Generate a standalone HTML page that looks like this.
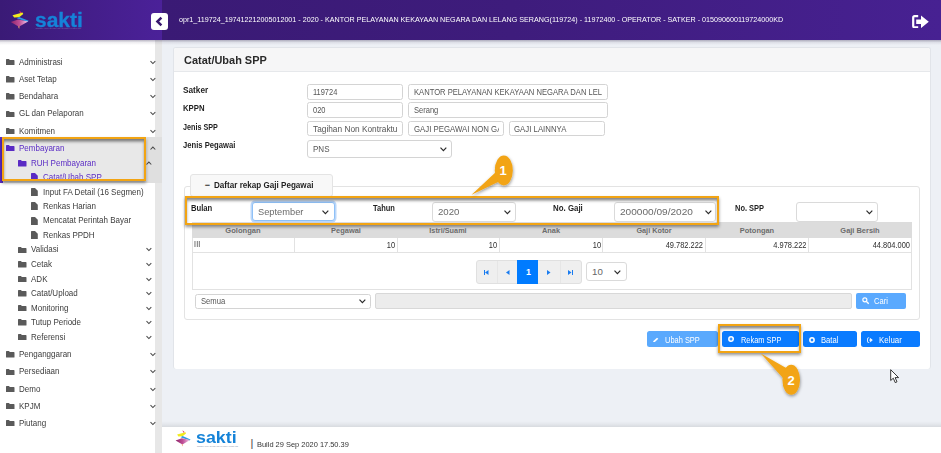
<!DOCTYPE html>
<html lang="id">
<head>
<meta charset="utf-8">
<title>SAKTI - Catat/Ubah SPP</title>
<style>
*{box-sizing:border-box;margin:0;padding:0}
html,body{width:941px;height:453px;overflow:hidden;background:#edf0f5;font-family:"Liberation Sans",sans-serif;font-size:9px;color:#333}
.abs{position:absolute}
.t{position:absolute;white-space:nowrap;line-height:12px;height:12px}
#hdrL{left:0;top:0;width:162px;height:40px;background:linear-gradient(90deg,#3a1a76 0%,#4b2199 100%)}
#hdrR{left:162px;top:0;width:779px;height:40px;background:linear-gradient(90deg,#3a1a75 0%,#3e1c7c 45%,#472192 100%)}
#hdrShadow{left:0;top:40px;width:941px;height:5px;background:linear-gradient(180deg,rgba(40,30,70,.32),rgba(40,30,70,.08) 50%,rgba(40,30,70,0))}
#toggle{left:151px;top:13px;width:17px;height:17px;background:#fff;border-radius:3px}
#side{left:0;top:40px;width:155px;height:413px;background:#fff}
#sbar{left:155.2px;top:40px;width:6.4px;height:413px;background:#e7e7e7}
#card{left:172.6px;top:47.2px;width:758px;height:321.6px;background:#fff;border:1px solid #e1e4e9;border-bottom:none;border-radius:3px}
#cardH{left:173.6px;top:48.2px;width:756px;height:23.6px;background:#f6f6f7;border-bottom:1px solid #e6e8eb;border-radius:2px 2px 0 0}
.box{position:absolute;border:1px solid #d4d4d4;border-radius:2.5px;background:#fff}
.btn{position:absolute;border-radius:2px}
.hl{position:absolute;border:2.3px solid #f2a413;box-shadow:0 2px 3px rgba(0,0,0,.42),inset 0 3px 3px -0.5px rgba(0,0,0,.48)}
</style>
</head>
<body>
<div class="abs" id="side"></div>
<div class="abs" id="sbar"></div>
<div class="abs" id="hdrShadow"></div>
<div class="abs" id="hdrL"></div>
<div class="abs" id="hdrR"></div>
<div class="abs" id="toggle"><svg width="17" height="17" viewBox="0 0 17 17"><path d="M10.4 4.6 L6.4 8.5 L10.4 12.4" fill="none" stroke="#38186f" stroke-width="2.5"/></svg></div>
<div class="t" style="top:14.13px;font-size:8px;color:#fff;left:178.8px;transform-origin:0 50%;transform:scaleX(0.895);">opr1_119724_197412212005012001 - 2020 - KANTOR PELAYANAN KEKAYAAN NEGARA DAN LELANG SERANG(119724) - 11972400 - OPERATOR - SATKER - 015090600119724000KD</div>
<svg class="abs" style="left:10px;top:9.5px" width="19.5" height="19.5" viewBox="0 0 16.2 17" preserveAspectRatio="none">
<defs><linearGradient id="lg1" x1="0" y1="0" x2="1" y2="0"><stop offset="0" stop-color="#8e2468"/><stop offset=".5" stop-color="#bf4f98"/><stop offset=".85" stop-color="#e4a6d2"/><stop offset="1" stop-color="#f6e0f0"/></linearGradient></defs>
<path d="M7.4 0.3L9.9 2.3L8.5 2.8Z" fill="#e2335c"/>
<path d="M2.1 4.6L10.5 2.2L11 3.4L7.6 6.3L3.4 6.5Z" fill="#f1ea1e"/>
<path d="M5.6 7.2L7.6 6.0L15.5 9.4L14.6 10.4Z" fill="#2b98e6"/>
<path d="M0.6 10.5L6.8 8.2L15 10.1L7.4 14.6Z" fill="url(#lg1)"/>
<path d="M6.6 14.4L8 14.2L7.6 16.5Z" fill="#f4a06a"/>
</svg>
<div class="abs" style="left:35.3px;top:7.6px;font-size:19.6px;line-height:24px;font-weight:bold;color:#1583d8;-webkit-text-stroke:0.3px #1583d8;white-space:nowrap;transform-origin:0 50%;transform:scaleX(1.07)">sakti</div>
<div class="abs" style="left:35.5px;top:27.2px;font-size:2.05px;line-height:3px;color:#7a6cae;white-space:nowrap;letter-spacing:-0.07px">SISTEM APLIKASI KEUANGAN TINGKAT INSTANSI</div>
<svg class="abs" style="left:912px;top:14.5px" width="17" height="13.5" viewBox="0 0 17 13.5"><path d="M6.2 1.2H2.6Q1.2 1.2 1.2 2.6V10.9Q1.2 12.3 2.6 12.3H6.2" fill="none" stroke="#fff" stroke-width="2.2"/><path d="M4.2 4.6H9V0.4L16.8 6.75L9 13.1V8.9H4.2Z" fill="#fff"/></svg>
<div class="abs" style="left:0;top:137px;width:162px;height:46px;background:#dfdfdf"></div>
<div class="abs" style="left:0;top:137px;width:2.5px;height:46px;background:#5a2bc4"></div>
<div class="abs" style="left:2.5px;top:137px;width:144px;height:44px;background:#e8e8e8"></div>
<svg class="abs" style="left:6px;top:59px" width="8.5" height="6.4" viewBox="0 0 8.5 6.4"><path d="M0.5 0H3L3.8 0.9H8Q8.5 0.9 8.5 1.4V5.9Q8.5 6.4 8 6.4H0.5Q0 6.4 0 5.9V0.5Q0 0 0.5 0Z" fill="#5a5a5a"/></svg>
<div class="t" style="top:55.88px;font-size:9px;color:#3c3c3c;left:18.5px;transform-origin:0 50%;transform:scaleX(0.890);">Administrasi</div>
<svg class="abs" style="left:149.7px;top:59.8px" width="6" height="5" viewBox="0 0 6 5"><path d="M0.5 1.1L2.9 3.5L5.3 1.1" fill="none" stroke="#4a4a4a" stroke-width="1.05"/></svg>
<svg class="abs" style="left:6px;top:76.2px" width="8.5" height="6.4" viewBox="0 0 8.5 6.4"><path d="M0.5 0H3L3.8 0.9H8Q8.5 0.9 8.5 1.4V5.9Q8.5 6.4 8 6.4H0.5Q0 6.4 0 5.9V0.5Q0 0 0.5 0Z" fill="#5a5a5a"/></svg>
<div class="t" style="top:73.08px;font-size:9px;color:#3c3c3c;left:18.5px;transform-origin:0 50%;transform:scaleX(0.890);">Aset Tetap</div>
<svg class="abs" style="left:149.7px;top:77.0px" width="6" height="5" viewBox="0 0 6 5"><path d="M0.5 1.1L2.9 3.5L5.3 1.1" fill="none" stroke="#4a4a4a" stroke-width="1.05"/></svg>
<svg class="abs" style="left:6px;top:93.4px" width="8.5" height="6.4" viewBox="0 0 8.5 6.4"><path d="M0.5 0H3L3.8 0.9H8Q8.5 0.9 8.5 1.4V5.9Q8.5 6.4 8 6.4H0.5Q0 6.4 0 5.9V0.5Q0 0 0.5 0Z" fill="#5a5a5a"/></svg>
<div class="t" style="top:90.28px;font-size:9px;color:#3c3c3c;left:18.5px;transform-origin:0 50%;transform:scaleX(0.890);">Bendahara</div>
<svg class="abs" style="left:149.7px;top:94.2px" width="6" height="5" viewBox="0 0 6 5"><path d="M0.5 1.1L2.9 3.5L5.3 1.1" fill="none" stroke="#4a4a4a" stroke-width="1.05"/></svg>
<svg class="abs" style="left:6px;top:110.6px" width="8.5" height="6.4" viewBox="0 0 8.5 6.4"><path d="M0.5 0H3L3.8 0.9H8Q8.5 0.9 8.5 1.4V5.9Q8.5 6.4 8 6.4H0.5Q0 6.4 0 5.9V0.5Q0 0 0.5 0Z" fill="#5a5a5a"/></svg>
<div class="t" style="top:107.48px;font-size:9px;color:#3c3c3c;left:18.5px;transform-origin:0 50%;transform:scaleX(0.890);">GL dan Pelaporan</div>
<svg class="abs" style="left:149.7px;top:111.39999999999999px" width="6" height="5" viewBox="0 0 6 5"><path d="M0.5 1.1L2.9 3.5L5.3 1.1" fill="none" stroke="#4a4a4a" stroke-width="1.05"/></svg>
<svg class="abs" style="left:6px;top:127.9px" width="8.5" height="6.4" viewBox="0 0 8.5 6.4"><path d="M0.5 0H3L3.8 0.9H8Q8.5 0.9 8.5 1.4V5.9Q8.5 6.4 8 6.4H0.5Q0 6.4 0 5.9V0.5Q0 0 0.5 0Z" fill="#5a5a5a"/></svg>
<div class="t" style="top:124.78px;font-size:9px;color:#3c3c3c;left:18.5px;transform-origin:0 50%;transform:scaleX(0.890);">Komitmen</div>
<svg class="abs" style="left:149.7px;top:128.70000000000002px" width="6" height="5" viewBox="0 0 6 5"><path d="M0.5 1.1L2.9 3.5L5.3 1.1" fill="none" stroke="#4a4a4a" stroke-width="1.05"/></svg>
<svg class="abs" style="left:6px;top:145.1px" width="8.5" height="6.4" viewBox="0 0 8.5 6.4"><path d="M0.5 0H3L3.8 0.9H8Q8.5 0.9 8.5 1.4V5.9Q8.5 6.4 8 6.4H0.5Q0 6.4 0 5.9V0.5Q0 0 0.5 0Z" fill="#5a2bc4"/></svg>
<div class="t" style="top:141.98px;font-size:9px;color:#5a2bc4;left:18.5px;transform-origin:0 50%;transform:scaleX(0.890);">Pembayaran</div>
<svg class="abs" style="left:149.7px;top:145.9px" width="6" height="5" viewBox="0 0 6 5"><path d="M0.5 3.5L2.9 1.1L5.3 3.5" fill="none" stroke="#4a4a4a" stroke-width="1.05"/></svg>
<svg class="abs" style="left:18.2px;top:160.4px" width="8.5" height="6.4" viewBox="0 0 8.5 6.4"><path d="M0.5 0H3L3.8 0.9H8Q8.5 0.9 8.5 1.4V5.9Q8.5 6.4 8 6.4H0.5Q0 6.4 0 5.9V0.5Q0 0 0.5 0Z" fill="#5a2bc4"/></svg>
<div class="t" style="top:157.28px;font-size:9px;color:#5a2bc4;left:30.8px;transform-origin:0 50%;transform:scaleX(0.890);">RUH Pembayaran</div>
<svg class="abs" style="left:146.4px;top:161.20000000000002px" width="6" height="5" viewBox="0 0 6 5"><path d="M0.5 3.5L2.9 1.1L5.3 3.5" fill="none" stroke="#4a4a4a" stroke-width="1.05"/></svg>
<div class="abs" style="left:0;top:170px;width:146px;height:9.6px;overflow:hidden"><div class="abs" style="left:0;top:-170px;width:146px;height:300px">
<svg class="abs" style="left:30.9px;top:172.9px" width="6.8" height="8.4" viewBox="0 0 6.8 8.4"><path d="M0.6 0H4L6.8 2.8V7.8Q6.8 8.4 6.2 8.4H0.6Q0 8.4 0 7.8V0.6Q0 0 0.6 0Z" fill="#5a2bc4"/></svg>
<div class="t" style="top:170.78px;font-size:9px;color:#5a2bc4;left:43px;transform-origin:0 50%;transform:scaleX(0.890);">Catat/Ubah SPP</div>
</div></div>
<svg class="abs" style="left:30.9px;top:187.7px" width="6.8" height="8.4" viewBox="0 0 6.8 8.4"><path d="M0.6 0H4L6.8 2.8V7.8Q6.8 8.4 6.2 8.4H0.6Q0 8.4 0 7.8V0.6Q0 0 0.6 0Z" fill="#5a5a5a"/></svg>
<div class="t" style="top:185.58px;font-size:9px;color:#3c3c3c;left:43px;transform-origin:0 50%;transform:scaleX(0.890);">Input FA Detail (16 Segmen)</div>
<svg class="abs" style="left:30.9px;top:202px" width="6.8" height="8.4" viewBox="0 0 6.8 8.4"><path d="M0.6 0H4L6.8 2.8V7.8Q6.8 8.4 6.2 8.4H0.6Q0 8.4 0 7.8V0.6Q0 0 0.6 0Z" fill="#5a5a5a"/></svg>
<div class="t" style="top:199.88px;font-size:9px;color:#3c3c3c;left:43px;transform-origin:0 50%;transform:scaleX(0.890);">Renkas Harian</div>
<svg class="abs" style="left:30.9px;top:216.5px" width="6.8" height="8.4" viewBox="0 0 6.8 8.4"><path d="M0.6 0H4L6.8 2.8V7.8Q6.8 8.4 6.2 8.4H0.6Q0 8.4 0 7.8V0.6Q0 0 0.6 0Z" fill="#5a5a5a"/></svg>
<div class="t" style="top:214.38px;font-size:9px;color:#3c3c3c;left:43px;transform-origin:0 50%;transform:scaleX(0.890);">Mencatat Perintah Bayar</div>
<svg class="abs" style="left:30.9px;top:230.9px" width="6.8" height="8.4" viewBox="0 0 6.8 8.4"><path d="M0.6 0H4L6.8 2.8V7.8Q6.8 8.4 6.2 8.4H0.6Q0 8.4 0 7.8V0.6Q0 0 0.6 0Z" fill="#5a5a5a"/></svg>
<div class="t" style="top:228.78px;font-size:9px;color:#3c3c3c;left:43px;transform-origin:0 50%;transform:scaleX(0.890);">Renkas PPDH</div>
<svg class="abs" style="left:18.2px;top:246.6px" width="8.5" height="6.4" viewBox="0 0 8.5 6.4"><path d="M0.5 0H3L3.8 0.9H8Q8.5 0.9 8.5 1.4V5.9Q8.5 6.4 8 6.4H0.5Q0 6.4 0 5.9V0.5Q0 0 0.5 0Z" fill="#5a5a5a"/></svg>
<div class="t" style="top:243.48px;font-size:9px;color:#3c3c3c;left:30.8px;transform-origin:0 50%;transform:scaleX(0.890);">Validasi</div>
<svg class="abs" style="left:146.4px;top:247.4px" width="6" height="5" viewBox="0 0 6 5"><path d="M0.5 1.1L2.9 3.5L5.3 1.1" fill="none" stroke="#4a4a4a" stroke-width="1.05"/></svg>
<svg class="abs" style="left:18.2px;top:261.2px" width="8.5" height="6.4" viewBox="0 0 8.5 6.4"><path d="M0.5 0H3L3.8 0.9H8Q8.5 0.9 8.5 1.4V5.9Q8.5 6.4 8 6.4H0.5Q0 6.4 0 5.9V0.5Q0 0 0.5 0Z" fill="#5a5a5a"/></svg>
<div class="t" style="top:258.08px;font-size:9px;color:#3c3c3c;left:30.8px;transform-origin:0 50%;transform:scaleX(0.890);">Cetak</div>
<svg class="abs" style="left:146.4px;top:262.0px" width="6" height="5" viewBox="0 0 6 5"><path d="M0.5 1.1L2.9 3.5L5.3 1.1" fill="none" stroke="#4a4a4a" stroke-width="1.05"/></svg>
<svg class="abs" style="left:18.2px;top:275.7px" width="8.5" height="6.4" viewBox="0 0 8.5 6.4"><path d="M0.5 0H3L3.8 0.9H8Q8.5 0.9 8.5 1.4V5.9Q8.5 6.4 8 6.4H0.5Q0 6.4 0 5.9V0.5Q0 0 0.5 0Z" fill="#5a5a5a"/></svg>
<div class="t" style="top:272.58px;font-size:9px;color:#3c3c3c;left:30.8px;transform-origin:0 50%;transform:scaleX(0.890);">ADK</div>
<svg class="abs" style="left:146.4px;top:276.5px" width="6" height="5" viewBox="0 0 6 5"><path d="M0.5 1.1L2.9 3.5L5.3 1.1" fill="none" stroke="#4a4a4a" stroke-width="1.05"/></svg>
<svg class="abs" style="left:18.2px;top:290.3px" width="8.5" height="6.4" viewBox="0 0 8.5 6.4"><path d="M0.5 0H3L3.8 0.9H8Q8.5 0.9 8.5 1.4V5.9Q8.5 6.4 8 6.4H0.5Q0 6.4 0 5.9V0.5Q0 0 0.5 0Z" fill="#5a5a5a"/></svg>
<div class="t" style="top:287.18px;font-size:9px;color:#3c3c3c;left:30.8px;transform-origin:0 50%;transform:scaleX(0.890);">Catat/Upload</div>
<svg class="abs" style="left:146.4px;top:291.1px" width="6" height="5" viewBox="0 0 6 5"><path d="M0.5 1.1L2.9 3.5L5.3 1.1" fill="none" stroke="#4a4a4a" stroke-width="1.05"/></svg>
<svg class="abs" style="left:18.2px;top:304.7px" width="8.5" height="6.4" viewBox="0 0 8.5 6.4"><path d="M0.5 0H3L3.8 0.9H8Q8.5 0.9 8.5 1.4V5.9Q8.5 6.4 8 6.4H0.5Q0 6.4 0 5.9V0.5Q0 0 0.5 0Z" fill="#5a5a5a"/></svg>
<div class="t" style="top:301.58px;font-size:9px;color:#3c3c3c;left:30.8px;transform-origin:0 50%;transform:scaleX(0.890);">Monitoring</div>
<svg class="abs" style="left:146.4px;top:305.5px" width="6" height="5" viewBox="0 0 6 5"><path d="M0.5 1.1L2.9 3.5L5.3 1.1" fill="none" stroke="#4a4a4a" stroke-width="1.05"/></svg>
<svg class="abs" style="left:18.2px;top:319.2px" width="8.5" height="6.4" viewBox="0 0 8.5 6.4"><path d="M0.5 0H3L3.8 0.9H8Q8.5 0.9 8.5 1.4V5.9Q8.5 6.4 8 6.4H0.5Q0 6.4 0 5.9V0.5Q0 0 0.5 0Z" fill="#5a5a5a"/></svg>
<div class="t" style="top:316.08px;font-size:9px;color:#3c3c3c;left:30.8px;transform-origin:0 50%;transform:scaleX(0.890);">Tutup Periode</div>
<svg class="abs" style="left:146.4px;top:320.0px" width="6" height="5" viewBox="0 0 6 5"><path d="M0.5 1.1L2.9 3.5L5.3 1.1" fill="none" stroke="#4a4a4a" stroke-width="1.05"/></svg>
<svg class="abs" style="left:18.2px;top:333.8px" width="8.5" height="6.4" viewBox="0 0 8.5 6.4"><path d="M0.5 0H3L3.8 0.9H8Q8.5 0.9 8.5 1.4V5.9Q8.5 6.4 8 6.4H0.5Q0 6.4 0 5.9V0.5Q0 0 0.5 0Z" fill="#5a5a5a"/></svg>
<div class="t" style="top:330.68px;font-size:9px;color:#3c3c3c;left:30.8px;transform-origin:0 50%;transform:scaleX(0.890);">Referensi</div>
<svg class="abs" style="left:146.4px;top:334.6px" width="6" height="5" viewBox="0 0 6 5"><path d="M0.5 1.1L2.9 3.5L5.3 1.1" fill="none" stroke="#4a4a4a" stroke-width="1.05"/></svg>
<svg class="abs" style="left:6px;top:351.3px" width="8.5" height="6.4" viewBox="0 0 8.5 6.4"><path d="M0.5 0H3L3.8 0.9H8Q8.5 0.9 8.5 1.4V5.9Q8.5 6.4 8 6.4H0.5Q0 6.4 0 5.9V0.5Q0 0 0.5 0Z" fill="#5a5a5a"/></svg>
<div class="t" style="top:348.18px;font-size:9px;color:#3c3c3c;left:18.5px;transform-origin:0 50%;transform:scaleX(0.890);">Penganggaran</div>
<svg class="abs" style="left:149.7px;top:352.1px" width="6" height="5" viewBox="0 0 6 5"><path d="M0.5 1.1L2.9 3.5L5.3 1.1" fill="none" stroke="#4a4a4a" stroke-width="1.05"/></svg>
<svg class="abs" style="left:6px;top:368.5px" width="8.5" height="6.4" viewBox="0 0 8.5 6.4"><path d="M0.5 0H3L3.8 0.9H8Q8.5 0.9 8.5 1.4V5.9Q8.5 6.4 8 6.4H0.5Q0 6.4 0 5.9V0.5Q0 0 0.5 0Z" fill="#5a5a5a"/></svg>
<div class="t" style="top:365.38px;font-size:9px;color:#3c3c3c;left:18.5px;transform-origin:0 50%;transform:scaleX(0.890);">Persediaan</div>
<svg class="abs" style="left:149.7px;top:369.3px" width="6" height="5" viewBox="0 0 6 5"><path d="M0.5 1.1L2.9 3.5L5.3 1.1" fill="none" stroke="#4a4a4a" stroke-width="1.05"/></svg>
<svg class="abs" style="left:6px;top:385.7px" width="8.5" height="6.4" viewBox="0 0 8.5 6.4"><path d="M0.5 0H3L3.8 0.9H8Q8.5 0.9 8.5 1.4V5.9Q8.5 6.4 8 6.4H0.5Q0 6.4 0 5.9V0.5Q0 0 0.5 0Z" fill="#5a5a5a"/></svg>
<div class="t" style="top:382.58px;font-size:9px;color:#3c3c3c;left:18.5px;transform-origin:0 50%;transform:scaleX(0.890);">Demo</div>
<svg class="abs" style="left:149.7px;top:386.5px" width="6" height="5" viewBox="0 0 6 5"><path d="M0.5 1.1L2.9 3.5L5.3 1.1" fill="none" stroke="#4a4a4a" stroke-width="1.05"/></svg>
<svg class="abs" style="left:6px;top:402.9px" width="8.5" height="6.4" viewBox="0 0 8.5 6.4"><path d="M0.5 0H3L3.8 0.9H8Q8.5 0.9 8.5 1.4V5.9Q8.5 6.4 8 6.4H0.5Q0 6.4 0 5.9V0.5Q0 0 0.5 0Z" fill="#5a5a5a"/></svg>
<div class="t" style="top:399.78px;font-size:9px;color:#3c3c3c;left:18.5px;transform-origin:0 50%;transform:scaleX(0.890);">KPJM</div>
<svg class="abs" style="left:149.7px;top:403.7px" width="6" height="5" viewBox="0 0 6 5"><path d="M0.5 1.1L2.9 3.5L5.3 1.1" fill="none" stroke="#4a4a4a" stroke-width="1.05"/></svg>
<svg class="abs" style="left:6px;top:420.1px" width="8.5" height="6.4" viewBox="0 0 8.5 6.4"><path d="M0.5 0H3L3.8 0.9H8Q8.5 0.9 8.5 1.4V5.9Q8.5 6.4 8 6.4H0.5Q0 6.4 0 5.9V0.5Q0 0 0.5 0Z" fill="#5a5a5a"/></svg>
<div class="t" style="top:416.98px;font-size:9px;color:#3c3c3c;left:18.5px;transform-origin:0 50%;transform:scaleX(0.890);">Piutang</div>
<svg class="abs" style="left:149.7px;top:420.90000000000003px" width="6" height="5" viewBox="0 0 6 5"><path d="M0.5 1.1L2.9 3.5L5.3 1.1" fill="none" stroke="#4a4a4a" stroke-width="1.05"/></svg>
<div class="hl" style="left:2.4px;top:137px;width:143.8px;height:44.2px"></div>
<div class="abs" id="card"></div>
<div class="abs" id="cardH"></div>
<div class="t" style="top:54.23px;font-size:10.6px;color:#2a2a2a;font-weight:bold;left:183.7px;transform-origin:0 50%;transform:scaleX(1.034);">Catat/Ubah SPP</div>
<div class="t" style="top:84.18px;font-size:9px;color:#1f1f1f;font-weight:bold;left:183px;transform-origin:0 50%;transform:scaleX(0.916);">Satker</div>
<div class="t" style="top:102.28px;font-size:9px;color:#1f1f1f;font-weight:bold;left:183px;transform-origin:0 50%;transform:scaleX(0.860);">KPPN</div>
<div class="t" style="top:120.58px;font-size:9px;color:#1f1f1f;font-weight:bold;left:183px;transform-origin:0 50%;transform:scaleX(0.800);">Jenis SPP</div>
<div class="t" style="top:139.08px;font-size:9px;color:#1f1f1f;font-weight:bold;left:183px;transform-origin:0 50%;transform:scaleX(0.850);">Jenis Pegawai</div>
<div class="box" style="left:307.4px;top:84.4px;width:96px;height:15.4px;"></div>
<div class="abs" style="left:308.4px;top:84.4px;width:90.4px;height:15.4px;overflow:hidden">
<div class="t" style="left:4.6px;top:1.95px;font-size:8.5px;color:#555;transform-origin:0 50%;transform:scaleX(0.876)">119724</div></div>
<div class="box" style="left:408.2px;top:84.4px;width:199.6px;height:15.4px;"></div>
<div class="abs" style="left:409.2px;top:84.4px;width:194.0px;height:15.4px;overflow:hidden">
<div class="t" style="left:4.6px;top:1.95px;font-size:8.5px;color:#555;transform-origin:0 50%;transform:scaleX(0.896)">KANTOR PELAYANAN KEKAYAAN NEGARA DAN LEL</div></div>
<div class="box" style="left:307.4px;top:102.4px;width:96px;height:15.4px;"></div>
<div class="abs" style="left:308.4px;top:102.4px;width:90.4px;height:15.4px;overflow:hidden">
<div class="t" style="left:4.6px;top:1.95px;font-size:8.5px;color:#555;transform-origin:0 50%;transform:scaleX(0.876)">020</div></div>
<div class="box" style="left:408.2px;top:102.4px;width:199.6px;height:15.4px;"></div>
<div class="abs" style="left:409.2px;top:102.4px;width:194.0px;height:15.4px;overflow:hidden">
<div class="t" style="left:4.6px;top:1.95px;font-size:8.5px;color:#555;transform-origin:0 50%;transform:scaleX(0.887)">Serang</div></div>
<div class="box" style="left:307.4px;top:120.8px;width:96px;height:15.4px;"></div>
<div class="abs" style="left:308.4px;top:120.8px;width:90.4px;height:15.4px;overflow:hidden">
<div class="t" style="left:4.6px;top:2.25px;font-size:8.5px;color:#555;transform-origin:0 50%;transform:scaleX(0.977)">Tagihan Non Kontraktu</div></div>
<div class="box" style="left:408.2px;top:120.8px;width:95.8px;height:15.4px;"></div>
<div class="abs" style="left:409.2px;top:120.8px;width:90.2px;height:15.4px;overflow:hidden">
<div class="t" style="left:4.6px;top:2.25px;font-size:8.5px;color:#555;transform-origin:0 50%;transform:scaleX(0.919)">GAJI PEGAWAI NON GA</div></div>
<div class="box" style="left:508.7px;top:120.8px;width:96px;height:15.4px;"></div>
<div class="abs" style="left:509.7px;top:120.8px;width:90.4px;height:15.4px;overflow:hidden">
<div class="t" style="left:4.6px;top:2.25px;font-size:8.5px;color:#555;transform-origin:0 50%;transform:scaleX(0.919)">GAJI LAINNYA</div></div>
<div class="box" style="left:307.4px;top:140px;width:144.2px;height:18.4px;border-radius:3px;"></div>
<div class="t" style="top:143.08px;font-size:9px;color:#555;left:312.9px;transform-origin:0 50%;transform:scaleX(0.892);">PNS</div>
<svg class="abs" style="left:439.8px;top:146.8px" width="7" height="5" viewBox="0 0 7 5"><path d="M0.5 0.6L3.4 3.7L6.3 0.6" fill="none" stroke="#2b2b2b" stroke-width="1.15"/></svg>
<div class="abs" style="left:183.5px;top:185.5px;width:736px;height:134px;border:1px solid #e3e3e3;border-radius:3px;background:#fff"></div>
<div class="abs" style="left:190.3px;top:174px;width:142.5px;height:23px;border:1px solid #e4e4e4;border-radius:3px;background:#f8f8f8"></div>
<div class="t" style="top:178.88px;font-size:9px;color:#1f1f1f;font-weight:bold;left:204.8px;transform-origin:0 50%;transform:scaleX(1.000);">−</div>
<div class="t" style="top:178.98px;font-size:9px;color:#1f1f1f;font-weight:bold;left:214.2px;transform-origin:0 50%;transform:scaleX(0.899);">Daftar rekap Gaji Pegawai</div>
<div class="abs" style="left:191.5px;top:222px;width:720.5px;height:15.6px;background:#dcdcdc"></div>
<div class="abs" style="left:191.5px;top:237.6px;width:720.5px;height:52.6px;border:1px solid #e2e2e2;border-top:none;background:#fff"></div>
<div class="t" style="top:225.03px;font-size:8px;color:#6c6c6c;font-weight:bold;left:242.95px;transform:translateX(-50%) scaleX(0.946);">Golongan</div>
<div class="t" style="top:239.46px;font-size:8.2px;color:#333;left:193.6px;transform-origin:0 50%;transform:scaleX(0.860);letter-spacing:0.25px;">III</div>
<div class="abs" style="left:293.9px;top:237.6px;width:1px;height:15px;background:#e2e2e2"></div>
<div class="t" style="top:225.03px;font-size:8px;color:#6c6c6c;font-weight:bold;left:345.9px;transform:translateX(-50%) scaleX(0.930);">Pegawai</div>
<div class="t" style="top:239.56px;font-size:8.2px;color:#2e2e2e;right:545.7px;transform-origin:100% 50%;transform:scaleX(0.910);">10</div>
<div class="abs" style="left:396.9px;top:237.6px;width:1px;height:15px;background:#e2e2e2"></div>
<div class="t" style="top:225.03px;font-size:8px;color:#6c6c6c;font-weight:bold;left:448.4px;transform:translateX(-50%) scaleX(0.912);">Istri/Suami</div>
<div class="t" style="top:239.56px;font-size:8.2px;color:#2e2e2e;right:443.70000000000005px;transform-origin:100% 50%;transform:scaleX(0.910);">10</div>
<div class="abs" style="left:498.9px;top:237.6px;width:1px;height:15px;background:#e2e2e2"></div>
<div class="t" style="top:225.03px;font-size:8px;color:#6c6c6c;font-weight:bold;left:551.0999999999999px;transform:translateX(-50%) scaleX(0.930);">Anak</div>
<div class="t" style="top:239.56px;font-size:8.2px;color:#2e2e2e;right:340.30000000000007px;transform-origin:100% 50%;transform:scaleX(0.910);">10</div>
<div class="abs" style="left:602.3px;top:237.6px;width:1px;height:15px;background:#e2e2e2"></div>
<div class="t" style="top:225.03px;font-size:8px;color:#6c6c6c;font-weight:bold;left:654.0999999999999px;transform:translateX(-50%) scaleX(0.910);">Gaji Kotor</div>
<div class="t" style="top:239.56px;font-size:8.2px;color:#2e2e2e;right:237.70000000000005px;transform-origin:100% 50%;transform:scaleX(0.910);">49.782.222</div>
<div class="abs" style="left:704.9px;top:237.6px;width:1px;height:15px;background:#e2e2e2"></div>
<div class="t" style="top:225.03px;font-size:8px;color:#6c6c6c;font-weight:bold;left:756.8499999999999px;transform:translateX(-50%) scaleX(0.930);">Potongan</div>
<div class="t" style="top:239.56px;font-size:8.2px;color:#2e2e2e;right:134.80000000000007px;transform-origin:100% 50%;transform:scaleX(0.910);">4.978.222</div>
<div class="abs" style="left:807.8px;top:237.6px;width:1px;height:15px;background:#e2e2e2"></div>
<div class="t" style="top:225.03px;font-size:8px;color:#6c6c6c;font-weight:bold;left:860.15px;transform:translateX(-50%) scaleX(0.930);">Gaji Bersih</div>
<div class="t" style="top:239.56px;font-size:8.2px;color:#2e2e2e;right:31.100000000000023px;transform-origin:100% 50%;transform:scaleX(0.910);">44.804.000</div>
<div class="abs" style="left:191.5px;top:252.2px;width:720.5px;height:1px;background:#e2e2e2"></div>
<div class="abs" style="left:476.2px;top:260px;width:106px;height:23.6px;background:#efefef;border:1px solid #e0e0e0;border-radius:3px"></div>
<div class="abs" style="left:497px;top:261px;width:1px;height:21.6px;background:#e6e6e6"></div>
<div class="abs" style="left:559.5px;top:261px;width:1px;height:21.6px;background:#e6e6e6"></div>
<div class="abs" style="left:517px;top:260px;width:21px;height:23.6px;background:#007bff"></div>
<div class="t" style="top:266.08px;font-size:9px;color:#fff;font-weight:bold;left:528.6px;transform:translateX(-50%) scaleX(1.000);">1</div>
<div class="abs" style="left:484px;top:269.5px;width:1px;height:5px;background:#1a7cf0"></div>
<svg class="abs" style="left:485px;top:269.5px" width="4" height="5" viewBox="0 0 4 5"><path d="M3.5 0L0 2.5L3.5 5Z" fill="#1a7cf0"/></svg>
<svg class="abs" style="left:506px;top:269.5px" width="4" height="5" viewBox="0 0 4 5"><path d="M3.5 0L0 2.5L3.5 5Z" fill="#1a7cf0"/></svg>
<svg class="abs" style="left:547px;top:269.5px" width="4" height="5" viewBox="0 0 4 5"><path d="M0 0L3.5 2.5L0 5Z" fill="#1a7cf0"/></svg>
<svg class="abs" style="left:568px;top:269.5px" width="4" height="5" viewBox="0 0 4 5"><path d="M0 0L3.5 2.5L0 5Z" fill="#1a7cf0"/></svg>
<div class="abs" style="left:572px;top:269.5px;width:1px;height:5px;background:#1a7cf0"></div>
<div class="box" style="left:586px;top:262px;width:41px;height:19.3px;border-radius:3px;border-color:#dadada;"></div>
<div class="t" style="top:265.94px;font-size:9.7px;color:#666;left:592px;transform-origin:0 50%;transform:scaleX(1.000);">10</div>
<svg class="abs" style="left:614px;top:269.5px" width="7" height="5" viewBox="0 0 7 5"><path d="M0.5 0.6L3.4 3.7L6.3 0.6" fill="none" stroke="#2b2b2b" stroke-width="1.15"/></svg>
<div class="box" style="left:195.4px;top:293.6px;width:175.4px;height:15.6px;"></div>
<div class="t" style="top:294.75px;font-size:8.5px;color:#555;left:200.5px;transform-origin:0 50%;transform:scaleX(0.900);">Semua</div>
<svg class="abs" style="left:358.5px;top:298.7px" width="7" height="5" viewBox="0 0 7 5"><path d="M0.5 0.6L3.4 3.7L6.3 0.6" fill="none" stroke="#2b2b2b" stroke-width="1.15"/></svg>
<div class="abs" style="left:374.6px;top:293.4px;width:477px;height:15.2px;background:#ececec;border:1px solid #d8d8d8;border-radius:2px"></div>
<div class="btn" style="left:856.4px;top:293.2px;width:50px;height:15.4px;background:#5aa9fe"></div>
<svg class="abs" style="left:862px;top:297.3px" width="7.4" height="7.4" viewBox="0 0 7 7"><circle cx="2.7" cy="2.7" r="1.9" fill="none" stroke="#fff" stroke-width="1.1"/><path d="M4.2 4.2L6.4 6.4" stroke="#fff" stroke-width="1.2"/></svg>
<div class="t" style="top:294.75px;font-size:8.5px;color:#fff;left:874.4px;transform-origin:0 50%;transform:scaleX(0.892);">Cari</div>
<div class="abs" style="left:185px;top:196.4px;width:734px;height:26px;background:#fff"></div>
<div class="t" style="top:201.98px;font-size:9px;color:#1f1f1f;font-weight:bold;left:190.9px;transform-origin:0 50%;transform:scaleX(0.852);">Bulan</div>
<div class="box" style="left:252px;top:202px;width:82.5px;height:19.3px;border-color:#8fc1f7;box-shadow:0 0 0 1.5px rgba(120,175,245,.5);border-radius:3px;"></div>
<div class="t" style="top:205.90px;font-size:9.8px;color:#6a6a6a;left:257.5px;transform-origin:0 50%;transform:scaleX(0.947);">September</div>
<svg class="abs" style="left:322px;top:209.6px" width="7" height="5" viewBox="0 0 7 5"><path d="M0.5 0.6L3.4 3.7L6.3 0.6" fill="none" stroke="#2b2b2b" stroke-width="1.15"/></svg>
<div class="t" style="top:201.98px;font-size:9px;color:#1f1f1f;font-weight:bold;left:372.8px;transform-origin:0 50%;transform:scaleX(0.832);">Tahun</div>
<div class="box" style="left:432.4px;top:202.2px;width:83.2px;height:19.4px;border-radius:3px;border-color:#dadada;"></div>
<div class="t" style="top:205.90px;font-size:9.8px;color:#6a6a6a;left:438.4px;transform-origin:0 50%;transform:scaleX(0.986);">2020</div>
<svg class="abs" style="left:503.5px;top:209.6px" width="7" height="5" viewBox="0 0 7 5"><path d="M0.5 0.6L3.4 3.7L6.3 0.6" fill="none" stroke="#2b2b2b" stroke-width="1.15"/></svg>
<div class="t" style="top:201.98px;font-size:9px;color:#1f1f1f;font-weight:bold;left:552.8px;transform-origin:0 50%;transform:scaleX(0.876);">No. Gaji</div>
<div class="box" style="left:614.3px;top:202.2px;width:102px;height:19.4px;border-radius:3px;border-color:#dadada;"></div>
<div class="t" style="top:205.90px;font-size:9.8px;color:#6a6a6a;left:619.5px;transform-origin:0 50%;transform:scaleX(1.030);">200000/09/2020</div>
<svg class="abs" style="left:705.2px;top:209.6px" width="7" height="5" viewBox="0 0 7 5"><path d="M0.5 0.6L3.4 3.7L6.3 0.6" fill="none" stroke="#2b2b2b" stroke-width="1.15"/></svg>
<div class="t" style="top:201.98px;font-size:9px;color:#1f1f1f;font-weight:bold;left:734.8px;transform-origin:0 50%;transform:scaleX(0.828);">No. SPP</div>
<div class="box" style="left:795.5px;top:202.2px;width:82.6px;height:19.4px;border-radius:3px;border-color:#dadada;"></div>
<svg class="abs" style="left:865.5px;top:209.6px" width="7" height="5" viewBox="0 0 7 5"><path d="M0.5 0.6L3.4 3.7L6.3 0.6" fill="none" stroke="#2b2b2b" stroke-width="1.15"/></svg>
<div class="hl" style="left:185px;top:196.4px;width:534px;height:28.6px"></div>
<div class="btn" style="left:647px;top:331.4px;width:71px;height:15.5px;background:#5aa9fd;border-radius:2.5px"></div>
<svg class="abs" style="left:653px;top:336.6px" width="6" height="5.6" viewBox="0 0 6 6" preserveAspectRatio="none"><path d="M0 6L0.4 4.3L4 0.7L5.3 2L1.7 5.6Z" fill="#fff"/></svg>
<div class="t" style="top:333.52px;font-size:8.3px;color:#fff;left:665.2px;transform-origin:0 50%;transform:scaleX(0.898);">Ubah SPP</div>
<div class="btn" style="left:803px;top:331.4px;width:53.6px;height:15.5px;background:#0a7bff;border-radius:2.5px"></div>
<svg class="abs" style="left:808.9px;top:336.7px" width="6" height="6" viewBox="0 0 7 7"><circle cx="3.5" cy="3.5" r="3.4" fill="#fff"/><path d="M2.3 2.3L4.7 4.7M4.7 2.3L2.3 4.7" stroke="#0a7bff" stroke-width="1.3"/></svg>
<div class="t" style="top:333.52px;font-size:8.3px;color:#fff;left:821px;transform-origin:0 50%;transform:scaleX(0.920);">Batal</div>
<div class="btn" style="left:861px;top:331.4px;width:58.5px;height:15.5px;background:#0a7bff;border-radius:2.5px"></div>
<svg class="abs" style="left:866.8px;top:336.5px" width="6" height="6.2" viewBox="0 0 7 7"><path d="M2.6 0.9H1.2Q0.6 0.9 0.6 1.5V5.5Q0.6 6.1 1.2 6.1H2.6" fill="none" stroke="#fff" stroke-width="1"/><path d="M2.4 3.5H5M4 1.6L6.2 3.5L4 5.4Z" fill="#fff" stroke="#fff" stroke-width="0.9"/></svg>
<div class="t" style="top:333.52px;font-size:8.3px;color:#fff;left:879px;transform-origin:0 50%;transform:scaleX(0.950);">Keluar</div>
<div class="abs" style="left:718.2px;top:324.2px;width:82.9px;height:28.8px;background:#fff"></div>
<div class="btn" style="left:721.9px;top:331.4px;width:77.3px;height:15.5px;background:#0a7bff;border-radius:2.5px"></div>
<svg class="abs" style="left:728.2px;top:336.4px" width="6.1" height="6.1" viewBox="0 0 7 7"><circle cx="3.5" cy="3.5" r="3.4" fill="#fff"/><path d="M3.5 1.8V5.2M1.8 3.5H5.2" stroke="#0a7bff" stroke-width="1.3"/></svg>
<div class="t" style="top:333.52px;font-size:8.3px;color:#fff;left:740.6px;transform-origin:0 50%;transform:scaleX(0.894);">Rekam SPP</div>
<div class="hl" style="left:718.2px;top:324.2px;width:82.9px;height:28.8px"></div>
<div class="abs" style="left:162px;top:420.5px;width:779px;height:6px;background:linear-gradient(180deg,rgba(0,0,0,0),rgba(0,0,0,.035) 50%,rgba(0,0,0,.09))"></div>
<div class="abs" style="left:162px;top:426.5px;width:779px;height:27px;background:#fff"></div>
<svg class="abs" style="left:175.3px;top:429.8px" width="16.2" height="17" viewBox="0 0 16.2 17" preserveAspectRatio="none">
<defs><linearGradient id="lg2" x1="0" y1="0" x2="1" y2="0"><stop offset="0" stop-color="#8e2468"/><stop offset=".5" stop-color="#bf4f98"/><stop offset=".85" stop-color="#e4a6d2"/><stop offset="1" stop-color="#f6e0f0"/></linearGradient></defs>
<path d="M7.4 0.3L9.9 2.3L8.5 2.8Z" fill="#e2335c"/>
<path d="M2.1 4.6L10.5 2.2L11 3.4L7.6 6.3L3.4 6.5Z" fill="#f1ea1e"/>
<path d="M5.6 7.2L7.6 6.0L15.5 9.4L14.6 10.4Z" fill="#2b98e6"/>
<path d="M0.6 10.5L6.8 8.2L15 10.1L7.4 14.6Z" fill="url(#lg2)"/>
<path d="M6.6 14.4L8 14.2L7.6 16.5Z" fill="#f4a06a"/>
</svg>
<div class="abs" style="left:196.3px;top:427.3px;font-size:17.3px;line-height:21px;font-weight:bold;color:#1583d8;white-space:nowrap;transform-origin:0 50%;transform:scaleX(1.03)">sakti</div>
<div class="abs" style="left:197px;top:445.3px;font-size:1.85px;line-height:3px;color:#8a93a8;white-space:nowrap;letter-spacing:-0.06px">SISTEM APLIKASI KEUANGAN TINGKAT INSTANSI</div>
<div class="abs" style="left:250.5px;top:437px;font-size:11px;line-height:13px;color:#444;white-space:nowrap">|</div>
<div class="t" style="top:438.53px;font-size:8px;color:#333;left:257px;transform-origin:0 50%;transform:scaleX(0.930);">Build 29 Sep 2020 17.50.39</div>
<svg class="abs" style="left:460px;top:145px" width="70" height="60" viewBox="460 145 70 60">
<defs><filter id="ds" x="-30%" y="-30%" width="160%" height="170%"><feDropShadow dx="0.5" dy="1.5" stdDeviation="1.4" flood-color="#000" flood-opacity=".4"/></filter></defs>
<g filter="url(#ds)"><path d="M471.6 194.8L495.4 172.5L498.5 181.8Z" fill="#f2a413"/><ellipse cx="503.8" cy="170.4" rx="9" ry="15" fill="#f2a413"/></g>
<text x="503.2" y="174.9" font-family="Liberation Sans, sans-serif" font-size="13" font-weight="bold" fill="#fff" text-anchor="middle">1</text></svg>
<svg class="abs" style="left:740px;top:340px" width="80" height="70" viewBox="740 340 80 70">
<g filter="url(#ds)"><path d="M760.8 353.6L787 368.5L783 378Z" fill="#f2a413"/><ellipse cx="791.2" cy="379.8" rx="8.8" ry="15" fill="#f2a413"/></g>
<text x="791" y="384.8" font-family="Liberation Sans, sans-serif" font-size="13" font-weight="bold" fill="#fff" text-anchor="middle">2</text></svg>
<svg class="abs" style="left:890px;top:369px" width="10" height="15" viewBox="0 0 10 15"><path d="M0.7 0.7V11.5L3.3 9.2L5.2 13.6L7 12.8L5.1 8.6H8.6Z" fill="#fff" stroke="#222" stroke-width="0.9" stroke-linejoin="round"/></svg>
</body>
</html>
